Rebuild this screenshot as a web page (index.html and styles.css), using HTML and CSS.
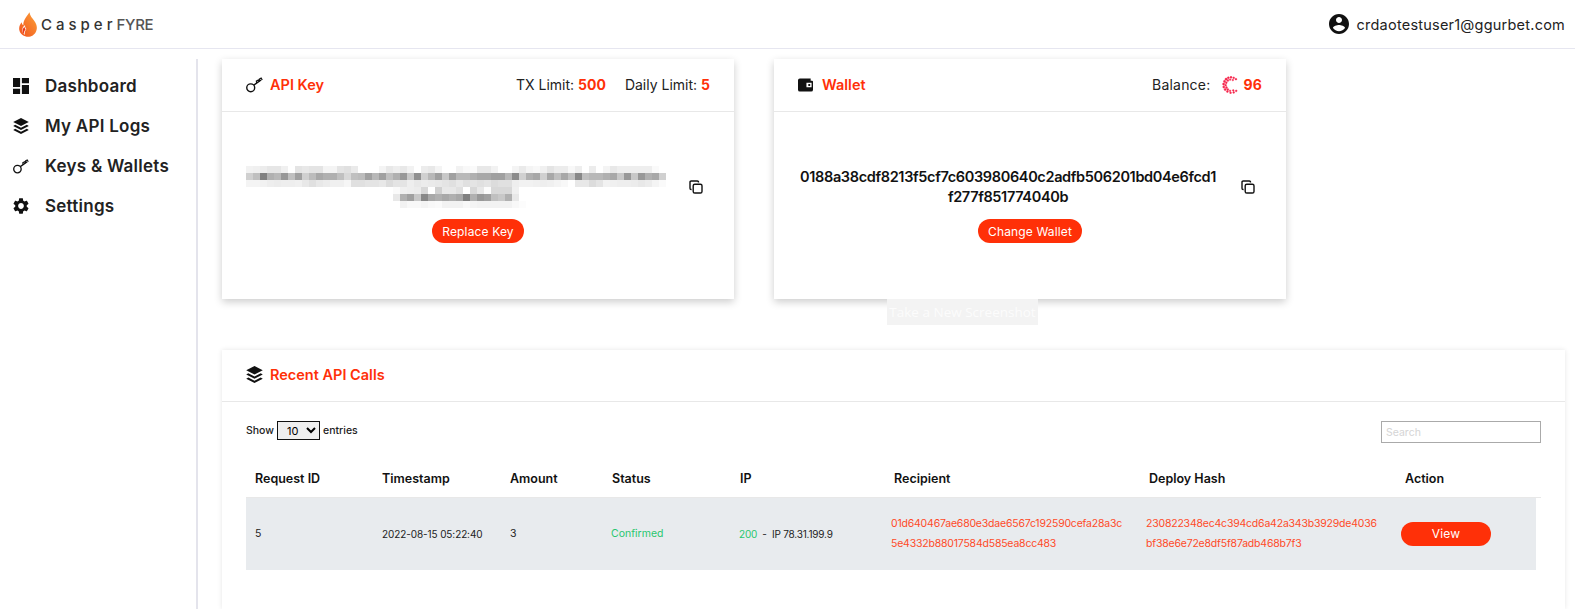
FILE: index.html
```html
<!DOCTYPE html>
<html lang="en">
<head>
    <meta charset="UTF-8">
    <title>CasperFYRE Dashboard</title>
    <link rel="stylesheet" href="styles.css">
</head>
<body>
    <svg class="icon-defs" width="0" height="0">
        <symbol id="i-layers" viewBox="1.500 1 15 15.400">
            <path d="M9 1 16.500 4.900 9 8.800 1.500 4.900z"/>
            <path d="M3.400 7.600 1.500 8.700 9 12.600 16.500 8.700 14.600 7.600 9 10.500z"/>
            <path d="M3.400 11.400 1.500 12.500 9 16.400 16.500 12.500 14.600 11.400 9 14.300z"/>
        </symbol>
        <symbol id="i-key" viewBox="0 0 18 18">
            <circle cx="5" cy="12.500" r="4.200" fill="none" stroke="currentColor" stroke-width="1.500"/>
            <path d="M8.200 9.700 16 4.200" fill="none" stroke="currentColor" stroke-width="1.500"/>
            <path d="M11.400 7.600 11 5.400 13 4.200 14.200 5.800M14.400 5.400 14.200 3.200 16 2.200 17.200 4.200" fill="none" stroke="currentColor" stroke-width="1.300"/>
        </symbol>
        <symbol id="i-copy" viewBox="0 0 14 14">
            <path d="M9.500 2.600V2.200C9.500 1.500 9 1 8.300 1H2.200C1.500 1 1 1.500 1 2.200v6.100c0 .7.5 1.200 1.200 1.200h.4" fill="none" stroke="currentColor" stroke-width="1.400"/>
            <rect x="4.200" y="4.200" width="8.800" height="8.800" rx="1.600" fill="none" stroke="currentColor" stroke-width="1.400"/>
        </symbol>
    </svg>

    <header class="topbar">
        <a class="brand" href="#">
            <svg class="brand-flame" viewBox="0 0 20 26">
                <defs>
                    <linearGradient id="flame" x1="0" y1="1" x2="1" y2="0">
                        <stop offset="0" stop-color="#f2521d"/>
                        <stop offset="1" stop-color="#fba33a"/>
                    </linearGradient>
                </defs>
                <path fill="url(#flame)" d="M11 0c.6 4 3 6 5 9 2.400 3.400 3.400 6.600 2.400 10-1 3.600-4 6.400-7.600 6.800C5.800 26.200 1.400 23.400.4 19c-.7-3.200.4-6 2.400-8.400.2 1.600.8 2.700 1.800 3.300C4.200 9 7.600 5 11 0z"/>
                <path fill="#fff" d="M6 24c-2-1.600-3-4-2.400-6.400.5-1.800 1.600-3 2.800-4-.3 2 .4 3 1.400 4.200-1.400 1.600-2 3.800-1.800 6.200z"/>
                <path fill="#e8391a" d="M5.200 23c-1.200-1.400-1.700-3.200-1.200-5 .3-1.100 1-2 1.800-2.700 0 1.300.5 2 1.200 2.800-1.200 1.300-1.800 3-1.800 4.900z"/>
            </svg>
            <span class="brand-name">Casper</span><span class="brand-fyre">FYRE</span>
        </a>
        <div class="user">
            <svg class="user-icon" viewBox="2 2 20 20"><path d="M12 2C6.480 2 2 6.480 2 12s4.480 10 10 10 10-4.480 10-10S17.520 2 12 2zm0 3c1.660 0 3 1.340 3 3s-1.340 3-3 3-3-1.340-3-3 1.340-3 3-3zm0 14.200c-2.500 0-4.710-1.280-6-3.220.03-1.990 4-3.080 6-3.080 1.990 0 5.970 1.090 6 3.080-1.290 1.940-3.500 3.220-6 3.220z"/></svg>
            <span>crdaotestuser1@ggurbet.com</span>
        </div>
    </header>

    <div class="layout">
        <nav class="sidebar">
            <a class="nav-item" href="#">
                <svg class="nav-icon" viewBox="3 3 18 18"><path d="M3 13h8V3H3v10zm0 8h8v-6H3v6zm10 0h8V11h-8v10zm0-18v6h8V3h-8z"/></svg>
                Dashboard
            </a>
            <a class="nav-item" href="#">
                <svg class="nav-icon"><use href="#i-layers"/></svg>
                My API Logs
            </a>
            <a class="nav-item" href="#">
                <svg class="nav-icon"><use href="#i-key"/></svg>
                Keys &amp; Wallets
            </a>
            <a class="nav-item" href="#">
                <svg class="nav-icon" viewBox="2.500 2 19 20"><path d="M19.140 12.940c.04-.3.06-.61.06-.94 0-.32-.02-.64-.07-.94l2.030-1.580c.18-.14.23-.41.12-.61l-1.920-3.320c-.12-.22-.37-.29-.59-.22l-2.390.96c-.5-.38-1.030-.7-1.620-.94l-.36-2.540c-.04-.24-.24-.41-.48-.41h-3.840c-.24 0-.43.17-.47.41l-.36 2.540c-.59.24-1.130.57-1.620.94l-2.390-.96c-.22-.08-.47 0-.59.22L2.740 8.870c-.12.21-.08.47.12.61l2.030 1.580c-.05.3-.09.63-.09.94s.02.64.07.94l-2.030 1.580c-.18.14-.23.41-.12.61l1.920 3.320c.12.22.37.29.59.22l2.390-.96c.5.38 1.030.7 1.620.94l.36 2.540c.05.24.24.41.48.41h3.840c.24 0 .44-.17.47-.41l.36-2.540c.59-.24 1.130-.56 1.620-.94l2.390.96c.22.08.47 0 .59-.22l1.920-3.320c.12-.22.07-.47-.12-.61l-2.010-1.580zM12 15.600c-1.980 0-3.600-1.620-3.600-3.600s1.620-3.600 3.600-3.600 3.600 1.620 3.600 3.600-1.620 3.600-3.600 3.600z"/></svg>
                Settings
            </a>
        </nav>

        <main class="content">
            <div class="cards">
                <section class="card">
                    <div class="card-head">
                        <div class="card-title">
                            <svg class="title-icon"><use href="#i-key"/></svg>
                            <h3>API Key</h3>
                        </div>
                        <div class="card-stats">
                            <span>TX Limit: <b>500</b></span>
                            <span>Daily Limit: <b>5</b></span>
                        </div>
                    </div>
                    <div class="card-body">
                        <div class="secret-row">
                            <div class="secret-text">
                                <canvas id="key-mosaic" class="mosaic" width="60" height="6"></canvas>
                            </div>
                            <svg class="copy-icon"><use href="#i-copy"/></svg>
                        </div>
                        <button class="pill">Replace Key</button>
                    </div>
                </section>

                <section class="card">
                    <div class="card-head">
                        <div class="card-title">
                            <svg class="wallet-icon" viewBox="0 0 16 14"><path fill-rule="evenodd" d="M2 0h11.500v2.500H15a1 1 0 0 1 1 1V12a2 2 0 0 1-2 2H2a2 2 0 0 1-2-2V2a2 2 0 0 1 2-2zm7 4.500V9.500h5.500v-5zM11 6h2v2h-2z"/></svg>
                            <h3>Wallet</h3>
                        </div>
                        <div class="card-stats">
                            <span class="balance">Balance:
                                <svg class="casper-icon" viewBox="0 0 20 20">
                                    <circle cx="10" cy="1.500" r="1.100"/><circle cx="13" cy="2" r="1"/><circle cx="7" cy="2" r="1.100"/><circle cx="15.500" cy="3.500" r="1"/><circle cx="4.500" cy="3.500" r="1.200"/><circle cx="9" cy="4" r=".9"/><circle cx="12" cy="4.500" r=".9"/><circle cx="6.500" cy="5" r="1"/><circle cx="2.800" cy="6" r="1.200"/><circle cx="4.800" cy="7.500" r="1"/><circle cx="1.800" cy="9" r="1.200"/><circle cx="4" cy="10.200" r="1"/><circle cx="2" cy="12.200" r="1.200"/><circle cx="5" cy="12.800" r="1"/><circle cx="3.500" cy="15" r="1.200"/><circle cx="6.500" cy="15" r="1"/><circle cx="6" cy="17.200" r="1.100"/><circle cx="9" cy="16.500" r=".9"/><circle cx="9.500" cy="18.700" r="1"/><circle cx="12.500" cy="16" r=".9"/><circle cx="13" cy="18.200" r="1"/><circle cx="15.800" cy="16.500" r="1"/>
                                </svg>
                                <b>96</b>
                            </span>
                        </div>
                    </div>
                    <div class="card-body">
                        <div class="secret-row">
                            <div class="secret-text wallet-address">0188a38cdf8213f5cf7c603980640c2adfb506201bd04e6fcd1<br>f277f851774040b</div>
                            <svg class="copy-icon"><use href="#i-copy"/></svg>
                        </div>
                        <button class="pill">Change Wallet</button>
                    </div>
                    <div class="shot-tip">Take a New Screenshot</div>
                </section>
            </div>

            <section class="card calls-card">
                <div class="card-head">
                    <div class="card-title">
                        <svg class="title-icon"><use href="#i-layers"/></svg>
                        <h3>Recent API Calls</h3>
                    </div>
                </div>
                <div class="calls-body">
                    <div class="table-tools">
                        <label class="entries">Show
                            <select><option>10</option><option>25</option><option>50</option></select>
                            entries
                        </label>
                        <input class="search" type="text" placeholder="Search">
                    </div>
                    <div class="table-head">
                        <span>Request ID</span>
                        <span>Timestamp</span>
                        <span>Amount</span>
                        <span>Status</span>
                        <span>IP</span>
                        <span>Recipient</span>
                        <span>Deploy Hash</span>
                        <span>Action</span>
                    </div>
                    <div class="table-row">
                        <span>5</span>
                        <span class="stamp">2022-08-15 05:22:40</span>
                        <span>3</span>
                        <span class="ok">Confirmed</span>
                        <span class="ip"><span class="ok">200</span> &nbsp;-&nbsp; IP 78.31.199.9</span>
                        <span class="hash">01d640467ae680e3dae6567c192590cefa28a3c<br>5e4332b88017584d585ea8cc483</span>
                        <span class="hash">230822348ec4c394cd6a42a343b3929de4036<br>bf38e6e72e8df5f87adb468b7f3</span>
                        <span><button class="pill view-btn">View</button></span>
                    </div>
                </div>
            </section>
        </main>
    </div>

    <script src="mosaic.js"></script>
</body>
</html>
```

FILE: styles.css
```css
* {
    margin: 0;
    padding: 0;
    box-sizing: border-box;
    font-family: Inter, "Liberation Sans", sans-serif;
}

html, body {
    height: 609px;
    overflow: hidden;
}

body {
    background: #fff;
    color: #111;
}

.icon-defs {
    display: block;
    height: 0;
}

svg {
    fill: currentColor;
}

/* top bar */
.topbar {
    display: flex;
    justify-content: space-between;
    align-items: center;
    height: 49px;
    padding: 0 10px 0 19px;
    border-bottom: 1px solid #e6e6f0;
}

.brand {
    display: flex;
    align-items: center;
    text-decoration: none;
    color: #333;
    font-size: 15px;
    font-weight: 500;
}

.brand-flame {
    width: 19px;
    height: 25px;
    margin-right: 3px;
}

.brand-name {
    letter-spacing: 4px;
}

.brand-fyre {
    letter-spacing: -0.3px;
    color: #555;
}

.user {
    display: flex;
    align-items: center;
    gap: 8px;
    font-size: 14.5px;
    letter-spacing: 0.22px;
    color: #222;
}

.user-icon {
    width: 20px;
    height: 20px;
    color: #111;
}

/* sidebar */
.layout {
    display: flex;
}

.sidebar {
    width: 198px;
    height: 550px;
    margin-top: 10px;
    padding: 7px 0 0 13px;
    border-right: 2px solid #e4e4ec;
}

.nav-item {
    display: flex;
    align-items: center;
    gap: 16px;
    height: 40px;
    font-size: 17px;
    font-weight: 600;
    letter-spacing: 0.25px;
    color: #222;
    text-decoration: none;
}

.nav-icon {
    width: 16px;
    height: 16px;
    color: #111;
}

/* cards */
.content {
    flex: 1;
    padding: 10px 10px 0 24px;
}

.cards {
    display: flex;
    gap: 40px;
}

.card {
    position: relative;
    width: 512px;
    height: 240px;
    background: #fff;
    box-shadow: 0 3px 8px rgba(0,0,0,0.2);
}

.card-head {
    display: flex;
    justify-content: space-between;
    align-items: center;
    height: 53px;
    padding: 0 24px 1px;
    border-bottom: 1px solid #e8e8e8;
}

.card-title {
    display: flex;
    align-items: center;
    gap: 7px;
}

.card-title h3 {
    font-size: 14.5px;
    font-weight: 600;
    color: #ff3008;
}

.title-icon {
    width: 17px;
    height: 17px;
    color: #111;
}

.wallet-icon {
    width: 15px;
    height: 14px;
    margin-right: 2px;
    color: #111;
}

.card-stats {
    display: flex;
    gap: 19px;
    font-size: 14px;
    color: #222;
}

.card-stats b {
    color: #ff3008;
    font-weight: 700;
}

.balance {
    display: flex;
    align-items: center;
    gap: 12px;
    letter-spacing: 0.2px;
}

.casper-icon {
    width: 18px;
    height: 18px;
    color: #f5234a;
    stroke: #f5234a;
    stroke-width: 0.5;
    margin-right: -9px;
}

.card-body {
    padding-top: 54px;
    text-align: center;
}

.secret-row {
    display: flex;
    align-items: center;
    height: 42px;
    padding-left: 24px;
    margin-bottom: 11px;
}

.secret-text {
    width: 424px;
    font-size: 14.5px;
    font-weight: 600;
    line-height: 20px;
}

.wallet-address {
    width: 420px;
    letter-spacing: -0.35px;
}

.mosaic {
    display: block;
    width: 420px;
    height: 42px;
    image-rendering: pixelated;
}

.copy-icon {
    width: 14px;
    height: 14px;
    margin-left: 19px;
    color: #111;
}

.wallet-address + .copy-icon {
    margin-left: 23px;
}

.pill {
    border: none;
    border-radius: 12px;
    height: 24px;
    padding: 0 10px;
    background: #ff3008;
    color: #fff;
    font-size: 12px;
    letter-spacing: 0.15px;
}

.shot-tip {
    position: absolute;
    left: 113px;
    top: 240px;
    width: 151px;
    height: 26px;
    line-height: 26px;
    text-align: center;
    white-space: nowrap;
    background: #f3f3f3;
    color: #fcfcfc;
    font-size: 13.5px;
    font-family: "Open Sans", sans-serif;
}

/* recent calls */
.calls-card {
    width: 1343px;
    height: 259px;
    margin-top: 51px;
    box-shadow: 0 0 5px rgba(0,0,0,0.1);
}

.calls-card .card-head {
    height: 52px;
    padding-bottom: 2px;
}

.calls-body {
    padding: 19px 24px 0;
}

.table-tools {
    display: flex;
    justify-content: space-between;
    align-items: flex-start;
    height: 47px;
}

.entries {
    display: flex;
    align-items: center;
    gap: 3px;
    font-size: 10.5px;
    font-weight: 500;
    color: #222;
}

.entries select {
    width: 43px;
    height: 19px;
    font-size: 11px;
    padding-left: 5px;
    background: #efefef;
    border: 1px solid #111;
    border-radius: 0;
}

.search {
    width: 160px;
    height: 22px;
    padding: 0 4px;
    border: 1px solid #aaa;
    font-size: 10.5px;
    outline: none;
}

.search::placeholder {
    color: #d5d5d5;
}

.table-head {
    display: grid;
    grid-template-columns: 127px 128px 102px 128px 154px 255px 256px 1fr;
    align-items: center;
    height: 30px;
    padding: 0 0 8px 9px;
    border-bottom: 1px solid #e8e8e8;
    font-size: 12.5px;
    font-weight: 600;
    color: #111;
}

.table-row {
    display: grid;
    grid-template-columns: 127px 128px 101px 128px 152px 255px 255px 1fr;
    align-items: center;
    width: 1290px;
    height: 72px;
    padding: 0 0 1px 9px;
    background: #e8ebee;
    font-size: 10.5px;
    color: #222;
}

.stamp {
    font-size: 10px;
    letter-spacing: -0.1px;
}

.ip {
    font-size: 10px;
    letter-spacing: -0.2px;
}

.ok {
    color: #28c76f;
}

.hash {
    color: #ff4a28;
    line-height: 20px;
    letter-spacing: -0.2px;
}

.view-btn {
    display: block;
    width: 90px;
    font-size: 12px;
}
```

FILE: mosaic.js
```js
// pixelated api key, one string per row, values are grey levels
const keyRows = [
    'f2 f0 ec e6 e6 f0 ff e4 e8 e4 e4 f4 f4 e4 e0 ea ff ff ff f4 e8 ee e8 f2 ff ec e8 f4 ff ff f2 f8 fa e8 e8 f2 ff ff f4 ea f4 f8 f0 e4 ec ec f8 ee ff ec ff f4 e8 ee ee ee ee ee fa ff',
    'd0 c0 80 b0 b8 98 c0 a0 d0 bc a8 b0 b0 c0 d8 c0 bc a0 b8 a0 c0 b0 98 c8 90 d0 b8 a0 c8 a0 b8 b8 b0 a8 a8 a0 a0 b8 8c d0 b0 a8 d0 a8 c0 a8 c0 88 c0 b8 b8 b0 a8 c8 98 c8 98 b0 a8 d0',
    'f4 f4 f2 ee ec ee ee f0 e8 e0 e8 ec f0 f0 f6 e0 e0 e4 e4 e8 dc e4 e4 ee e8 ec ea e8 e4 e0 e8 e0 e4 e0 e4 dc e0 e0 ee f2 f2 f0 ee f0 f4 f8 ff e8 e8 dc e4 f2 f0 ee ee ec e8 ec f4 fa',
    'ff ff ff ff ff ff ff ff ff ff ff ff ff ff ff ff ff ff ff ff ff fa f0 ee ec d8 ff d0 e8 e8 e0 ff d8 e8 fc d8 d8 d8 f0 ff',
    'ff ff ff ff ff ff ff ff ff ff ff ff ff ff ff ff ff ff ff ff ff e8 b0 a0 c8 88 a8 b0 a8 b0 a8 80 b0 98 a0 c0 c8 b0 e8 ff',
    'ff ff ff ff ff ff ff ff ff ff ff ff ff ff ff ff ff ff ff ff ff ff f2 f8 f8 f4 f8 fa f2 f2 f2 f8 f4 f2 f2 f2 f2 f2 f8 fc'
];

const ctx = document.getElementById('key-mosaic').getContext('2d');
ctx.fillStyle = '#fff';
ctx.fillRect(0, 0, 60, 6);

keyRows.forEach((row, y) => {
    row.split(' ').forEach((grey, x) => {
        ctx.fillStyle = '#' + grey + grey + grey;
        ctx.fillRect(x, y, 1, 1);
    });
});
```
